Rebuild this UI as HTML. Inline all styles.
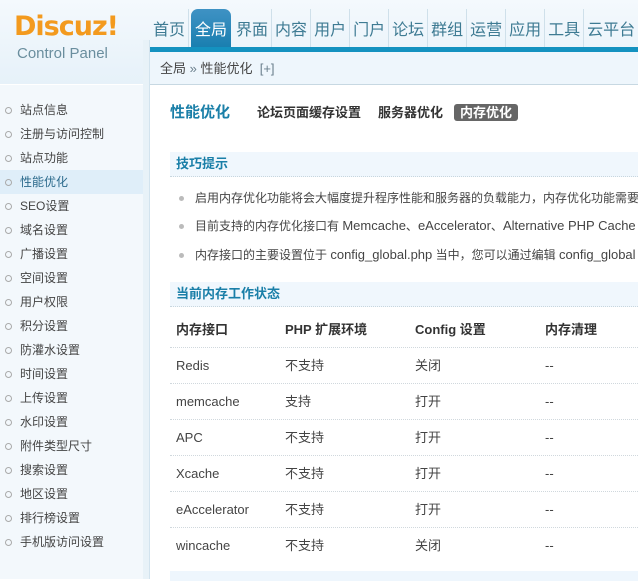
<!DOCTYPE html>
<html><head><meta charset="utf-8"><style>
*{margin:0;padding:0;box-sizing:border-box}
body{width:638px;height:579px;overflow:hidden;background:#fff;font-family:"Liberation Sans","Noto Sans CJK SC",sans-serif;font-size:12px;color:#333;position:relative}
.hdr{position:absolute;left:0;top:0;width:638px;height:84px;background:linear-gradient(#f4f9fd,#e6f1f9)}
.logo{position:absolute;left:14px;top:11px;font-family:"DejaVu Sans","Liberation Sans",sans-serif;font-weight:bold;font-size:27px;line-height:32px;color:#f39a1e;letter-spacing:-1px}
.cp{position:absolute;left:17px;top:45px;font-size:15px;color:#6a8e9e}
.nav{position:absolute;left:150px;top:9px;height:38px;display:flex;white-space:nowrap;overflow:hidden;width:488px}
.nav span{flex-shrink:0;font-size:16px;color:#3e7b93;padding:12px 3px 0;height:38px;border-right:1px solid #cfe0ea;line-height:20px}
.nav span.on{background:linear-gradient(#3f92c4,#1a7fb0);color:#fff;border-radius:7px 7px 0 0;padding:12px 4px 0;margin:0 2px;border:none}
.bar{position:absolute;left:150px;top:47px;width:488px;height:5px;background:#1492c0}
.crumb{position:absolute;left:150px;top:52px;width:488px;height:33px;background:#eef6fc;border-bottom:1px solid #c7d8e2;font-size:13px;color:#444;padding:9px 0 0 10px;line-height:16px}
.crumb b{font-weight:normal;color:#6a7f8c}
.side{position:absolute;left:0;top:85px;width:143px;height:494px;background:#f3f8fc}
.strip{position:absolute;left:143px;top:40px;width:7px;height:539px;background:#e8f2f8;border-right:1px solid #d2e3ee}
.side div{height:24px;line-height:24px;padding-left:20px;font-size:12px;color:#444;position:relative}
.side div:before{content:"";position:absolute;left:5px;top:9px;width:5px;height:5px;border:1px solid #aaa;border-radius:50%}
.side div.on{background:#dfeef9;color:#2b6a8c}
.main{position:absolute;left:151px;top:85px;width:487px}
.tt{position:absolute;left:19px;top:18px;font-size:15px;font-weight:bold;color:#1a7fa8;line-height:20px}
.tabs{position:absolute;left:106px;top:19px;font-size:13px;font-weight:bold;color:#333;line-height:18px;white-space:nowrap}
.tabs span{margin-right:17px}
.tabs .on{background:#666;color:#fff;border-radius:3px;padding:1px 6px;margin-left:-6px}
.sh{position:absolute;left:19px;width:470px;height:25px;background:#f0f7fd;border-bottom:1px dotted #c8d6de;font-size:13px;font-weight:bold;color:#1a7fa8;padding:4px 0 0 6px;line-height:16px}
.tip{position:absolute;left:26px;width:461px;overflow:hidden;font-size:12px;color:#444;white-space:nowrap;line-height:16px;height:16px;padding-left:18px}
.tip:before{content:"";position:absolute;left:2px;top:6px;width:5px;height:5px;background:#bbb;border-radius:50%}
.tip i{font-style:normal;font-size:13px}
.row{position:absolute;left:19px;width:470px;height:36px;border-bottom:1px dotted #d0d8dd;font-size:13px;color:#444}
.row span{position:absolute;top:10px;line-height:16px;height:16px;white-space:nowrap}
.row.h{font-weight:bold;color:#333}
.foot{position:absolute;left:19px;top:486px;width:470px;height:10px;background:#eef6fd}
</style></head><body>
<div class="hdr"></div>
<div class="logo">Discuz!</div>
<div class="cp">Control Panel</div>
<div class="nav"><span>首页</span><span class="on">全局</span><span>界面</span><span>内容</span><span>用户</span><span>门户</span><span>论坛</span><span>群组</span><span>运营</span><span>应用</span><span>工具</span><span>云平台</span></div>
<div class="bar"></div>
<div class="crumb">全局 <b>»</b> 性能优化 &nbsp;<b>[+]</b></div>
<div class="strip"></div>
<div class="side" style="padding-top:13px">
<div>站点信息</div><div>注册与访问控制</div><div>站点功能</div><div class="on">性能优化</div><div>SEO设置</div><div>域名设置</div><div>广播设置</div><div>空间设置</div><div>用户权限</div><div>积分设置</div><div>防灌水设置</div><div>时间设置</div><div>上传设置</div><div>水印设置</div><div>附件类型尺寸</div><div>搜索设置</div><div>地区设置</div><div>排行榜设置</div><div>手机版访问设置</div>
</div>
<div class="main">
<div class="tt">性能优化</div>
<div class="tabs"><span>论坛页面缓存设置</span><span>服务器优化</span><span class="on">内存优化</span></div>
<div class="sh" style="top:67px">技巧提示</div>
<div class="tip" style="top:105px">启用内存优化功能将会大幅度提升程序性能和服务器的负载能力，内存优化功能需要</div>
<div class="tip" style="top:133px">目前支持的内存优化接口有 <i>Memcache</i>、<i>eAccelerator</i>、<i>Alternative PHP Cache</i></div>
<div class="tip" style="top:162px">内存接口的主要设置位于 <i>config_global.php</i> 当中，您可以通过编辑 <i>config_global</i></div>
<div class="sh" style="top:197px">当前内存工作状态</div>
<div class="row h" style="top:227px"><span style="left:6px">内存接口</span><span style="left:115px">PHP 扩展环境</span><span style="left:245px">Config 设置</span><span style="left:375px">内存清理</span></div>
<div class="row" style="top:263px"><span style="left:6px">Redis</span><span style="left:115px">不支持</span><span style="left:245px">关闭</span><span style="left:375px">--</span></div>
<div class="row" style="top:299px"><span style="left:6px">memcache</span><span style="left:115px">支持</span><span style="left:245px">打开</span><span style="left:375px">--</span></div>
<div class="row" style="top:335px"><span style="left:6px">APC</span><span style="left:115px">不支持</span><span style="left:245px">打开</span><span style="left:375px">--</span></div>
<div class="row" style="top:371px"><span style="left:6px">Xcache</span><span style="left:115px">不支持</span><span style="left:245px">打开</span><span style="left:375px">--</span></div>
<div class="row" style="top:407px"><span style="left:6px">eAccelerator</span><span style="left:115px">不支持</span><span style="left:245px">打开</span><span style="left:375px">--</span></div>
<div class="row" style="top:443px;border:none"><span style="left:6px">wincache</span><span style="left:115px">不支持</span><span style="left:245px">关闭</span><span style="left:375px">--</span></div>
<div class="foot"></div>
</div>
</body></html>
